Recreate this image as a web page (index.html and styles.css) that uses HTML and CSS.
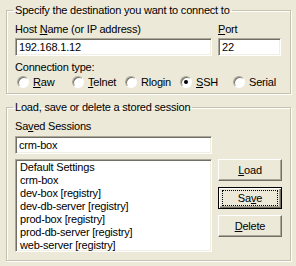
FILE: index.html
```html
<!DOCTYPE html>
<html lang="en">
<head>
    <meta charset="UTF-8">
    <title>PuTTY Session</title>
    <link rel="stylesheet" href="styles.css">
</head>
<body>
    <div class="dialog">
        <fieldset class="group group-dest">
            <legend>Specify the destination you want to connect to</legend>
            <div class="host-row">
                <div class="field host">
                    <div class="label">Host <u>N</u>ame (or IP address)</div>
                    <div class="textbox">192.168.1.12</div>
                </div>
                <div class="field port">
                    <div class="label"><u>P</u>ort</div>
                    <div class="textbox">22</div>
                </div>
            </div>
            <div class="caption">Connection type:</div>
            <div class="radios">
                <div class="radio"><span class="circle"></span><span><u>R</u>aw</span></div>
                <div class="radio"><span class="circle"></span><span><u>T</u>elnet</span></div>
                <div class="radio"><span class="circle"></span><span>Rlogin</span></div>
                <div class="radio"><span class="circle checked"></span><span><u>S</u>SH</span></div>
                <div class="radio"><span class="circle"></span><span>Serial</span></div>
            </div>
        </fieldset>

        <fieldset class="group group-sessions">
            <legend>Load, save or delete a stored session</legend>
            <div class="label">Sa<u>v</u>ed Sessions</div>
            <div class="textbox session-name">crm-box</div>
            <div class="session-row">
                <ul class="listbox">
                    <li>Default Settings</li>
                    <li>crm-box</li>
                    <li>dev-box [registry]</li>
                    <li>dev-db-server [registry]</li>
                    <li>prod-box [registry]</li>
                    <li>prod-db-server [registry]</li>
                    <li>web-server [registry]</li>
                </ul>
                <div class="buttons">
                    <button class="btn"><u>L</u>oad</button>
                    <button class="btn default"><span class="focus">Sa<u>v</u>e</span></button>
                    <button class="btn"><u>D</u>elete</button>
                </div>
            </div>
        </fieldset>
    </div>
</body>
</html>
```

FILE: styles.css
```css
body {
    margin: 0;
    background: #ece9d8;
    font-family: "Liberation Sans", Arial, sans-serif;
    font-size: 11px;
    letter-spacing: -0.2px;
    color: #000;
}
.dialog {
    width: 296px;
    height: 266px;
    padding: 3px 0 0 6px;
    box-sizing: border-box;
}
.group {
    width: 285px;
    margin: 0;
    padding: 0 8px;
    box-sizing: border-box;
    border: 1px solid #c5c2b2;
    box-shadow: inset 1px 1px 0 #fff, 1px 1px 0 #fff;
}
.group legend {
    padding: 0 2px;
    margin-left: -2px;
    line-height: 14px;
}
.group-dest {
    height: 91px;
}
.group-sessions {
    height: 161px;
    margin-top: 6px;
}
.label {
    line-height: 14px;
    margin-top: 5px;
}
.host-row {
    display: flex;
    gap: 6px;
}
.host {
    width: 197px;
}
.port {
    width: 63px;
}
.textbox {
    height: 18px;
    margin-top: 2px;
    padding: 0 3px;
    box-sizing: border-box;
    background: #fff;
    border: 1px solid;
    border-color: #aca899 #fff #fff #aca899;
    box-shadow: inset 1px 1px 0 #716f64, inset -1px -1px 0 #f1efe2;
    line-height: 16px;
}
.caption {
    line-height: 14px;
    margin-top: 4px;
}
.radios {
    display: grid;
    grid-template-columns: 55px 53px 55px 53px auto;
    margin: 1px 0 0 2px;
    line-height: 14px;
}
.radio {
    display: flex;
    align-items: center;
    gap: 4px;
}
.circle {
    width: 12px;
    height: 12px;
    box-sizing: border-box;
    border-radius: 50%;
    background: #fff;
    border: 1px solid;
    border-color: #aca899 #fff #fff #aca899;
    box-shadow: inset 1px 1px 0 #716f64;
    position: relative;
}
.circle.checked::after {
    content: "";
    position: absolute;
    left: 3px;
    top: 3px;
    width: 4px;
    height: 4px;
    border-radius: 50%;
    background: #000;
}
.session-name {
    width: 197px;
    margin-top: 3px;
}
.session-row {
    display: flex;
    gap: 6px;
    margin-top: 5px;
}
.listbox {
    width: 197px;
    height: 93px;
    margin: 0;
    padding: 1px 4px;
    box-sizing: border-box;
    list-style: none;
    overflow: hidden;
    background: #fff;
    border: 1px solid;
    border-color: #aca899 #fff #fff #aca899;
    box-shadow: inset 1px 1px 0 #716f64, inset -1px -1px 0 #f1efe2;
    line-height: 13px;
}
.buttons {
    display: flex;
    flex-direction: column;
    gap: 6px;
}
.btn {
    width: 64px;
    height: 22px;
    padding: 0;
    font: inherit;
    letter-spacing: inherit;
    color: #000;
    background: #ece9d8;
    border: 1px solid;
    border-color: #fff #716f64 #716f64 #fff;
    box-shadow: inset -1px -1px 0 #aca899;
    cursor: pointer;
}
.btn.default {
    border: 1px solid #000;
    box-shadow: inset 1px 1px 0 #fff, inset -1px -1px 0 #716f64, inset -2px -2px 0 #aca899;
}
.focus {
    display: inline-block;
    width: 54px;
    line-height: 14px;
    border: 1px dotted #000;
}
```
